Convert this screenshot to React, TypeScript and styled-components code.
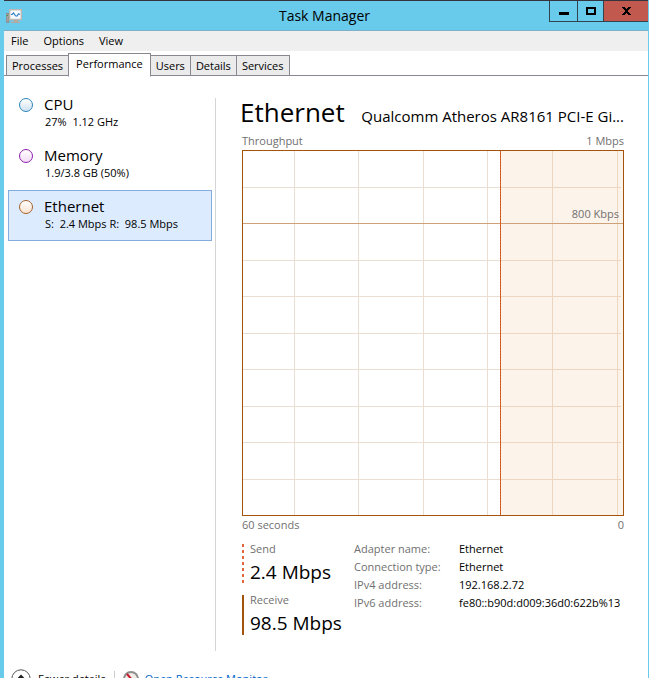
import React from 'react';
import styled, { createGlobalStyle } from 'styled-components';

const GlobalStyle = createGlobalStyle`
  * { box-sizing: border-box; }
  body {
    margin: 0;
    overflow: hidden;
    background: #fff;
    color: #000;
    font: 11px/18px "Open Sans", "Noto Sans", sans-serif;
  }
  button { font: inherit; color: inherit; padding: 0; margin: 0; border: 0; background: none; }
`;

const Frame = styled.div`
  height: 100vh;
  display: flex;
  flex-direction: column;
  border: solid #68cbec;
  border-width: 0 1px 0 4px;
  background: #fff;
  overflow: hidden;
`;

const TitleBar = styled.header`
  position: relative;
  flex: none;
  height: 31px;
  margin: 0 -1px 0 -4px;
  background: #68cbec;
  border-top: 1px solid #33343d;
  border-bottom: 1px solid #7eb0cc;
  display: flex;
  align-items: center;
  justify-content: center;
`;

const AppIcon = styled.svg`
  position: absolute;
  left: 6px;
  top: 7px;
`;

const WindowTitle = styled.h1`
  margin: 0;
  font-size: 14px;
  line-height: 20px;
  font-weight: 400;
`;

const WindowButtons = styled.div`
  position: absolute;
  right: 0;
  top: 0;
  height: 21px;
  display: flex;
  border-bottom: 1px solid #33434d;
`;

const WindowButton = styled.button<{ $close?: boolean }>`
  width: ${p => (p.$close ? 46 : 26)}px;
  border-left: 1px solid #33434d;
  background: ${p => (p.$close ? '#c2594f' : 'transparent')};
  display: flex;
  align-items: center;
  justify-content: center;

  &:first-child { width: 28px; }
`;

const MenuBar = styled.nav`
  flex: none;
  height: 20px;
  padding-left: 7px;
  display: flex;
  gap: 15px;
  background: #efefef;
`;

const MenuButton = styled.button`
  line-height: 20px;
`;

const TabStrip = styled.div`
  flex: none;
  height: 25px;
  padding-left: 2px;
  display: flex;
  align-items: flex-end;
  border-bottom: 1px solid #898792;
`;

const Tab = styled.button<{ $active?: boolean }>`
  height: ${p => (p.$active ? 24 : 21)}px;
  padding: ${p => (p.$active ? '0 7px 3px' : '0 5px')};
  margin-bottom: ${p => (p.$active ? -2 : -1)}px;
  border: 1px solid #898792;
  border-bottom-color: ${p => (p.$active ? '#fff' : '#898792')};
  background: ${p => (p.$active ? '#fff' : '#ebebeb')};
  white-space: nowrap;

  & + & { margin-left: -1px; }
`;

const Body = styled.main`
  flex: none;
  display: flex;
  padding: 12px 24px 0 4px;
`;

const Resources = styled.div`
  flex: none;
  width: 204px;
`;

const Resource = styled.button<{ $active?: boolean }>`
  width: 100%;
  height: 51px;
  padding: 5px 10px;
  display: flex;
  align-items: flex-start;
  gap: 11px;
  text-align: left;
  border: 1px solid ${p => (p.$active ? '#84acdd' : 'transparent')};
  background: ${p => (p.$active ? '#dcebfe' : 'transparent')};
`;

const Dot = styled.span<{ $line: string; $fill: string }>`
  flex: none;
  width: 14px;
  height: 14px;
  margin-top: 4px;
  border: 1px solid ${p => p.$line};
  border-radius: 50%;
  background: linear-gradient(#fff, ${p => p.$fill});
`;

const ResourceName = styled.span`
  display: block;
  font-size: 15px;
  line-height: 20px;
`;

const ResourceInfo = styled.span`
  display: block;
  padding-left: 1px;
  line-height: 15px;
  white-space: pre;
`;

const Divider = styled.div`
  flex: none;
  width: 1px;
  margin: 10px 24px 0 3px;
  background: #d5d5d5;
`;

const Details = styled.section`
  flex: 1;
  min-width: 0;
  min-height: 563px;
`;

const Heading = styled.div`
  display: flex;
  align-items: baseline;
  gap: 14px;
  height: 44px;
`;

const Readings = styled.div`
  padding-left: 2px;
`;

const ResourceTitle = styled.h2`
  margin: 0;
  font-size: 26px;
  line-height: 48px;
  font-weight: 400;
`;

const Adapter = styled.span`
  flex: 1;
  min-width: 0;
  font-size: 15px;
  text-align: right;
  white-space: nowrap;
  overflow: hidden;
  text-overflow: ellipsis;
`;

const ScaleRow = styled.div`
  display: flex;
  justify-content: space-between;
  color: #707070;
`;

const Chart = styled.div`
  position: relative;
  height: 366px;
  border: 1px solid #a5540b;

  svg { display: block; width: 100%; height: 100%; }
`;

const ChartLabel = styled.span`
  position: absolute;
  right: 4px;
  top: 54px;
  color: #707070;
`;

const Stats = styled.div`
  display: flex;
  gap: 12px;
  padding-top: 10px;
`;

const Rates = styled.div`
  flex: none;
  width: 100px;
  display: flex;
  flex-direction: column;
  gap: 11px;
`;

const Rate = styled.div<{ $dashed?: boolean }>`
  height: 40px;
  padding-left: 8px;
  background: ${p =>
    p.$dashed
      ? 'repeating-linear-gradient(#e0673a 0 3px, #fff 3px 6px)'
      : 'linear-gradient(#a5540b, #a5540b)'} left / 2px 100% no-repeat;
  white-space: nowrap;
`;

const RateLabel = styled.span`
  display: block;
  line-height: 10px;
  color: #707070;
`;

const RateValue = styled.span`
  display: block;
  font-size: 19px;
  line-height: 36px;
`;

const Facts = styled.table`
  border-collapse: collapse;
  height: 72px;
  margin-top: -4px;
  white-space: nowrap;

  th, td { padding: 0; text-align: left; font-weight: 400; height: 18px; }
  th { min-width: 105px; color: #707070; }
`;

const Footer = styled.footer`
  flex: none;
  height: 41px;
  padding: 14px 7px 0;
  display: flex;
  align-items: center;
  gap: 8px;
`;

const FooterButton = styled.button`
  display: flex;
  align-items: center;
  gap: 7px;
`;

const FooterRule = styled.span`
  width: 1px;
  height: 16px;
  background: #ccc;
`;

const MonitorLink = styled.a`
  display: flex;
  align-items: center;
  gap: 6px;
  color: #0066cc;
  text-decoration: none;
`;

const resources = [
  { name: 'CPU', info: '27%  1.12 GHz', line: '#2b86b8', fill: '#cfe2f1' },
  { name: 'Memory', info: '1.9/3.8 GB (50%)', line: '#8f1fae', fill: '#f2dcf6' },
  { name: 'Ethernet', info: 'S:  2.4 Mbps R:  98.5 Mbps', line: '#a5632b', fill: '#fbe3d1' },
];

const facts = [
  ['Adapter name:', 'Ethernet'],
  ['Connection type:', 'Ethernet'],
  ['IPv4 address:', '192.168.2.72'],
  ['IPv6 address:', 'fe80::b90d:d009:36d0:622b%13'],
];

const columns = [51, 115, 180, 244, 309, 374];
const rows = [36, 109, 145, 182, 218, 255, 291, 328];

function ThroughputChart() {
  return (
    <Chart>
      <svg viewBox="0 0 380 364" preserveAspectRatio="none" shapeRendering="crispEdges" aria-hidden="true">
        <rect x="258" width="122" height="364" fill="#fcf3ea" />
        {columns.map(x => <rect key={x} x={x} width="1" height="364" fill={x > 258 ? '#ecd5c1' : '#eaddd2'} />)}
        {rows.map(y => (
          <g key={y}>
            <rect y={y} width="258" height="1" fill="#eaddd2" />
            <rect x="258" y={y} width="120" height="1" fill="#ecd5c1" />
          </g>
        ))}
        <rect y="72" width="380" height="1" fill="#cfa178" />
        <rect x="257" width="1" height="364" fill="#b5530f" />
        <path d="M257.500 0V364" stroke="#e0612c" strokeDasharray="2 1" />
      </svg>
      <ChartLabel>800 Kbps</ChartLabel>
    </Chart>
  );
}

export default function App() {
  return (
    <>
      <GlobalStyle />
      <Frame>
        <TitleBar>
          <AppIcon width="17" height="17" viewBox="0 0 17 17" aria-hidden="true">
            <rect x="0.500" y="5.500" width="2.500" height="9" fill="#aaa39d" stroke="#817d7b" strokeWidth="0.600" />
            <rect x="1" y="7" width="1" height="1" fill="#2e9c3b" />
            <rect x="3.700" y="1.700" width="11.600" height="9.800" fill="#f8fbff" stroke="#bfb8b2" strokeWidth="1.400" />
            <path d="M5 6.500h1L7.500 5 9.500 7.800 11 8l1.500-2.300L14 6.500" fill="none" stroke="#2f82c8" strokeWidth="1.200" />
            <path d="M8 12h4v1.500h2V15H5v-1.500h3z" fill="#b4aba4" />
          </AppIcon>
          <WindowTitle>Task Manager</WindowTitle>
          <WindowButtons>
            <WindowButton aria-label="Minimize">
              <svg width="10" height="10" shapeRendering="crispEdges"><path d="M0 6h10v3H0z" /></svg>
            </WindowButton>
            <WindowButton aria-label="Maximize">
              <svg width="10" height="8" shapeRendering="crispEdges"><path fillRule="evenodd" d="M0 0h10v8H0zM2 2v4h6V2z" /></svg>
            </WindowButton>
            <WindowButton $close aria-label="Close">
              <svg width="9" height="8" shapeRendering="crispEdges">
                <path d="M0 0h3v1h1v1h1V1h1V0h3v1H8v1H7v1H6v2h1v1h1v1h1v1H6V7H5V6H4v1H3v1H0V7h1V6h1V5h1V3H2V2H1V1H0z" />
              </svg>
            </WindowButton>
          </WindowButtons>
        </TitleBar>
        <MenuBar>
          <MenuButton>File</MenuButton>
          <MenuButton>Options</MenuButton>
          <MenuButton>View</MenuButton>
        </MenuBar>
        <TabStrip role="tablist">
          {['Processes', 'Performance', 'Users', 'Details', 'Services'].map(name => (
            <Tab key={name} role="tab" aria-selected={name === 'Performance'} $active={name === 'Performance'}>
              {name}
            </Tab>
          ))}
        </TabStrip>
        <Body>
          <Resources>
            {resources.map(r => (
              <Resource key={r.name} $active={r.name === 'Ethernet'}>
                <Dot $line={r.line} $fill={r.fill} />
                <span>
                  <ResourceName>{r.name}</ResourceName>
                  <ResourceInfo>{r.info}</ResourceInfo>
                </span>
              </Resource>
            ))}
          </Resources>
          <Divider />
          <Details>
            <Heading>
              <ResourceTitle>Ethernet</ResourceTitle>
              <Adapter>Qualcomm Atheros AR8161 PCI-E Gi...</Adapter>
            </Heading>
            <Readings>
              <ScaleRow><span>Throughput</span><span>1 Mbps</span></ScaleRow>
              <ThroughputChart />
              <ScaleRow><span>60 seconds</span><span>0</span></ScaleRow>
              <Stats>
                <Rates>
                  <Rate $dashed><RateLabel>Send</RateLabel><RateValue>2.4 Mbps</RateValue></Rate>
                  <Rate><RateLabel>Receive</RateLabel><RateValue>98.5 Mbps</RateValue></Rate>
                </Rates>
                <Facts>
                  <tbody>
                    {facts.map(([label, value]) => (
                      <tr key={label}><th scope="row">{label}</th><td>{value}</td></tr>
                    ))}
                  </tbody>
                </Facts>
              </Stats>
            </Readings>
          </Details>
        </Body>
        <Footer>
          <FooterButton>
            <svg width="20" height="20" viewBox="0 0 20 20" fill="none" stroke="#555" aria-hidden="true">
              <circle cx="10" cy="10" r="9.200" />
              <path d="m6 11 4-4 4 4" stroke="#222" strokeWidth="2" />
            </svg>
            Fewer details
          </FooterButton>
          <FooterRule />
          <MonitorLink href="#resource-monitor">
            <svg width="16" height="16" viewBox="0 0 16 16" aria-hidden="true">
              <circle cx="8" cy="8" r="7" fill="#f1ece8" stroke="#8e8e8e" strokeWidth="2" />
              <path d="m4 3 6 7" stroke="#c9182b" strokeWidth="2" />
            </svg>
            Open Resource Monitor
          </MonitorLink>
        </Footer>
      </Frame>
    </>
  );
}
